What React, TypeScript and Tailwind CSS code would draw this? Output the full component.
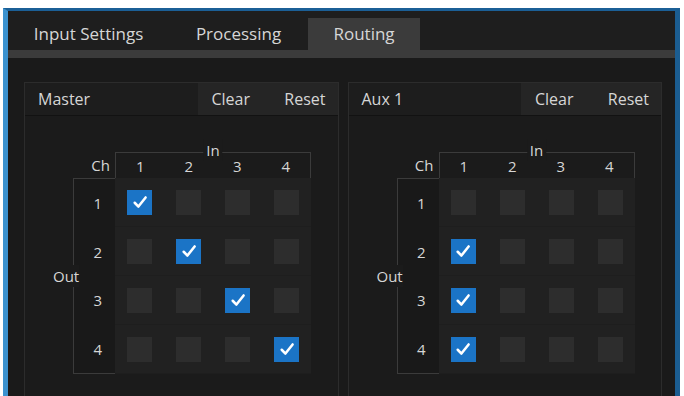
import React from "react";

type Matrix = boolean[][];

const diag: Matrix = [0, 1, 2, 3].map((r) => [0, 1, 2, 3].map((c) => r === c));
const aux: Matrix = [0, 1, 2, 3].map((r) => [0, 1, 2, 3].map((c) => c === 0 && r > 0));

function Check({ on }: { on: boolean }) {
  if (!on) return <div className="h-[25px] w-[25px] bg-[#2d2d2d]" />;
  return (
    <div className="flex h-[25px] w-[25px] items-center justify-center bg-[#1b74c6]">
      <svg width="18" height="18" viewBox="0 0 17 17">
        <path d="M3.5 9.2 L7 12.8 L13.8 4.2" fill="none" stroke="#ffffff" strokeWidth="2.4" strokeLinecap="round" strokeLinejoin="round" />
      </svg>
    </div>
  );
}

function RoutePanel({ title, checks }: { title: string; checks: Matrix }) {
  return (
    <div className="h-[340px] flex-1 border border-[#2c2c2c] bg-[#1b1b1b]">
      {/* header */}
      <div className="flex h-[33px] items-center border-b border-[#121212] bg-[#1d1d1d]">
        <span className="flex-1 pl-[13px]">{title}</span>
        <div className="flex h-full w-[140px] items-center justify-between bg-[#252525] pl-[14px] pr-[12px]">
          <span>Clear</span>
          <span>Reset</span>
        </div>
      </div>

      {/* matrix */}
      <div className="pl-[48px] pt-[36px]">
        <div className="grid w-max grid-cols-[42px_repeat(4,49px)] grid-rows-[26px_repeat(4,49px)] text-[15px]">
          <div className="flex items-center justify-end pr-[5px]">Ch</div>
          <div className="relative col-span-4 grid grid-cols-4 border-x border-t border-[#3b3b3b]">
            <span className="absolute -top-[14px] left-1/2 -translate-x-1/2 bg-[#1b1b1b] px-[3px] leading-[22px]">In</span>
            {[1, 2, 3, 4].map((n) => (
              <span key={n} className="flex items-center justify-center pt-[2px]">
                {n}
              </span>
            ))}
          </div>

          <div className="relative row-span-4 flex flex-col border-y border-l border-[#3b3b3b] bg-[#191919]">
            <span className="absolute left-[-21px] top-1/2 -translate-y-1/2 bg-[#1b1b1b] py-[2px] leading-[18px]">Out</span>
            {[1, 2, 3, 4].map((n) => (
              <span key={n} className="flex h-[49px] items-center justify-end pr-[13px]">
                {n}
              </span>
            ))}
          </div>

          <div className="col-span-4 row-span-4 grid grid-cols-4 grid-rows-4 bg-[#212121]">
            {checks.map((row, r) =>
              row.map((on, c) => (
                <div key={`${r}-${c}`} className="flex items-center justify-center border-b border-[#1e1e1e]">
                  <Check on={on} />
                </div>
              ))
            )}
          </div>
        </div>
      </div>
    </div>
  );
}

export default function App() {
  return (
    <div className="h-[396px] w-[684px] overflow-hidden bg-white pl-[3px] pr-[4px] pt-[8px] font-['Open_Sans',sans-serif] text-[16px] font-medium text-[#d6d6d6]">
      <div className="border-l-[5px] border-r-[5px] border-t-[3px] border-l-[#3b92cf] border-r-[#1b5d91] border-t-[#1b5f96] bg-[#1a1a1a]">
        {/* tabs */}
        <div className="flex h-[39px] items-end bg-[#1e1e1e] text-[17px]">
          <div className="flex h-[32px] w-[161px] items-center justify-center">Input Settings</div>
          <div className="flex h-[32px] w-[139px] items-center justify-center">Processing</div>
          <div className="flex h-[32px] w-[112px] items-center justify-center bg-[#3b3b3b]">Routing</div>
        </div>
        <div className="h-[8px] bg-[#3b3b3b]" />

        {/* panels */}
        <div className="flex gap-[9px] pl-[16px] pr-[13px] pt-[24px]">
          <RoutePanel title="Master" checks={diag} />
          <RoutePanel title="Aux 1" checks={aux} />
        </div>
      </div>
    </div>
  );
}
